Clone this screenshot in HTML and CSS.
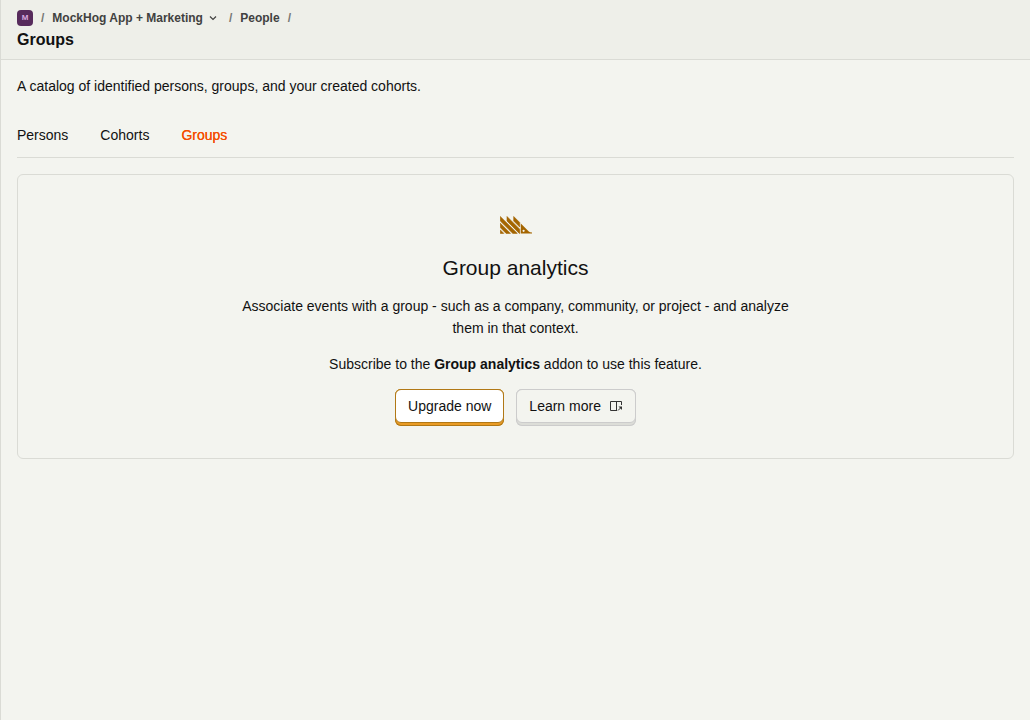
FILE: index.html
```html
<!DOCTYPE html>
<html lang="en">
<head>
<meta charset="utf-8">
<title>Groups</title>
<link rel="stylesheet" href="styles.css">
</head>
<body>
<div class="scene">
  <header class="topbar">
    <nav class="crumbs" aria-label="Breadcrumb">
      <span class="avatar">M</span>
      <span class="sep">/</span>
      <button class="project" type="button">MockHog App + Marketing
        <svg class="chevron" viewBox="0 0 12 12" aria-hidden="true"><path d="M3 4.5 6 7.5 9 4.5"/></svg>
      </button>
      <span class="sep">/</span>
      <a class="crumb" href="#">People</a>
      <span class="sep">/</span>
    </nav>
    <h1 class="title">Groups</h1>
  </header>
  <main class="content">
    <p class="caption">A catalog of identified persons, groups, and your created cohorts.</p>
    <nav class="tabs" aria-label="People">
      <a class="tab" href="#">Persons</a>
      <a class="tab" href="#">Cohorts</a>
      <a class="tab tab-active" href="#" aria-current="page">Groups</a>
    </nav>
    <section class="paygate">
      <svg class="logo" viewBox="0 0 32 18" aria-hidden="true">
        <path class="stripes" d="M.3.5 17.3 17.4H12.8L.3 5ZM.3 7.2 10.5 17.4H6.1L.3 11.6ZM.3 13.9 3.8 17.4H.3ZM7 .5 19.7 13.2V17.4H19.3L7 5ZM13.7.5 19.7 6.5V11L13.7 5Z"/>
        <path fill-rule="evenodd" d="M20.8 7.4 28.8 15.4Q29.8 16.2 32 16.4V17.6H20.8ZM23.6 13.7A1.1 1.1 0 1 0 23.6 15.9 1.1 1.1 0 1 0 23.6 13.7Z"/>
      </svg>
      <h2 class="heading">Group analytics</h2>
      <p class="lead">Associate events with a group - such as a company, community, or project - and analyze them in that context.</p>
      <p class="note">Subscribe to the <strong>Group analytics</strong> addon to use this feature.</p>
      <div class="actions">
        <button class="button button-primary" type="button"><span class="face">Upgrade now</span></button>
        <a class="button" href="#"><span class="face">Learn more
          <svg class="icon" viewBox="0 0 14 14" aria-hidden="true"><path d="M8 11.5H1.5V2.5H12.5V6M7.5 2.5V11.5M9 11.5 11.5 9"/><path class="tip" d="M9.5 7.5H13V11Z"/></svg></span></a>
      </div>
    </section>
  </main>
</div>
</body>
</html>
```
FILE: styles.css
```css
* { box-sizing: border-box; }
body {
  margin: 0;
  background: #f3f4ef;
  color: #111;
  font: 14px/20px "Liberation Sans", Arial, sans-serif;
}
h1, h2, p { margin: 0; }
a { color: inherit; text-decoration: none; }
button { font: inherit; color: inherit; padding: 0; border: 0; background: none; cursor: pointer; }
.scene { min-height: 100vh; border-left: 1px solid #dadbd5; }
.topbar {
  padding: 10px 16px 9px;
  background: #eeefe9;
  border-bottom: 1px solid #dadbd5;
}
.crumbs {
  display: flex;
  align-items: center;
  gap: 8px;
  font-size: 12px;
  line-height: 16px;
  font-weight: 700;
  color: #414140;
}
.avatar {
  width: 16px;
  height: 16px;
  border-radius: 4px;
  background: #572b5c;
  color: #d8a9df;
  font-size: 8px;
  text-align: center;
}
.sep { color: #777874; }
.project { display: flex; align-items: center; gap: 4px; padding-right: 2px; }
.chevron { width: 12px; height: 12px; fill: none; stroke: currentColor; stroke-width: 1.2; }
.title { margin-top: 4px; font-size: 16px; line-height: 20px; }
.content { padding: 16px; }
.tabs {
  display: flex;
  gap: 32px;
  margin-top: 16px;
  border-bottom: 1px solid #dadbd5;
}
.tab { padding: 13px 0 12px; }
.tab-active { color: #f54e00; text-shadow: 0 0 0 currentColor; }
.paygate {
  display: flex;
  flex-direction: column;
  align-items: center;
  margin-top: 16px;
  padding: 41px 32px 32px;
  border: 1px solid #dadbd5;
  border-radius: 6px;
  text-align: center;
}
.logo { width: 32px; height: 18px; fill: #a46500; }
.stripes { stroke: #a46500; stroke-width: 0.6; stroke-linejoin: round; }
.heading { margin-top: 18px; font-size: 21px; line-height: 32px; font-weight: 400; }
.lead { max-width: 576px; margin-top: 11px; line-height: 22px; }
.note { margin-top: 14px; line-height: 22px; }
.actions { display: flex; gap: 12px; margin-top: 14px; }
.button {
  padding-bottom: 3px;
  border-radius: 6px;
  background: #dcddd8;
  box-shadow: inset 0 0 0 1px #ccc;
}
.face {
  display: flex;
  align-items: center;
  gap: 8px;
  height: 34px;
  padding: 0 12px;
  border: 1px solid #ccc;
  border-radius: 6px;
  background: #f3f4ef;
}
.button-primary { background: #e99b25; box-shadow: inset 0 0 0 1px #b17816; }
.button-primary .face { background: #fff; border-color: #b17816; }
.icon { width: 14px; height: 14px; fill: none; stroke: #333; stroke-width: 1; }
.tip { fill: #333; stroke: none; }
```
